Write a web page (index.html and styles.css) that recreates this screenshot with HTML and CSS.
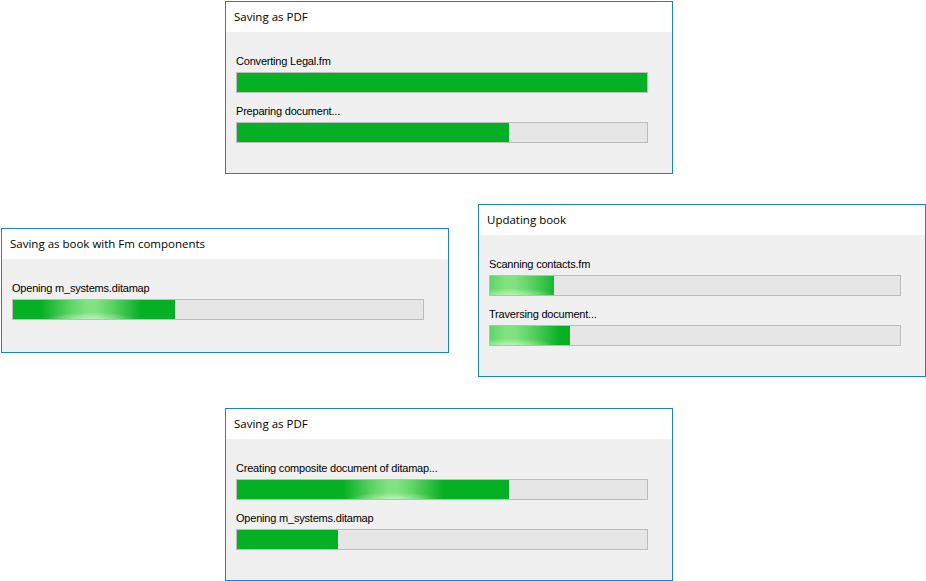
FILE: index.html
```html
<!DOCTYPE html>
<html lang="en">
<head>
<meta charset="utf-8">
<title>Progress dialogs</title>
<link rel="stylesheet" href="styles.css">
</head>
<body>
<div class="desk">
  <div class="row row-1">
    <section class="dlg">
      <header class="dlg-title">Saving as PDF</header>
      <div class="dlg-body">
        <div class="task">
          <div class="task-label">Converting Legal.fm</div>
          <div class="bar"><div class="fill" style="width:410px"></div></div>
        </div>
        <div class="task">
          <div class="task-label">Preparing document...</div>
          <div class="bar"><div class="fill" style="width:272px"></div></div>
        </div>
      </div>
    </section>
  </div>

  <div class="row row-2">
    <section class="dlg dlg-left">
      <header class="dlg-title">Saving as book with Fm components</header>
      <div class="dlg-body dlg-body-single">
        <div class="task">
          <div class="task-label">Opening m_systems.ditamap</div>
          <div class="bar"><div class="fill" style="width:162px"><span class="glow" style="left:28px"></span></div></div>
        </div>
      </div>
    </section>
    <section class="dlg dlg-right">
      <header class="dlg-title">Updating book</header>
      <div class="dlg-body">
        <div class="task">
          <div class="task-label">Scanning contacts.fm</div>
          <div class="bar"><div class="fill" style="width:64px"><span class="glow" style="left:-30px"></span></div></div>
        </div>
        <div class="task">
          <div class="task-label">Traversing document...</div>
          <div class="bar"><div class="fill" style="width:80px"><span class="glow" style="left:-30px"></span></div></div>
        </div>
      </div>
    </section>
  </div>

  <div class="row row-3">
    <section class="dlg">
      <header class="dlg-title">Saving as PDF</header>
      <div class="dlg-body">
        <div class="task">
          <div class="task-label">Creating composite document of ditamap...</div>
          <div class="bar"><div class="fill" style="width:272px"><span class="glow" style="left:106px"></span></div></div>
        </div>
        <div class="task">
          <div class="task-label">Opening m_systems.ditamap</div>
          <div class="bar"><div class="fill" style="width:101px"></div></div>
        </div>
      </div>
    </section>
  </div>
</div>
</body>
</html>
```

FILE: styles.css
```css
html, body {
  margin: 0;
  padding: 0;
  background: #ffffff;
}

body {
  width: 926px;
  height: 581px;
  overflow: hidden;
}

.desk {
  display: flex;
  flex-direction: column;
  align-items: flex-start;
}

.row {
  display: flex;
  align-items: flex-start;
}

.row-1 {
  margin: 1px 0 0 225px;
}

.row-2 {
  margin-top: 30px;
}

.dlg-left {
  margin: 24px 0 0 1px;
}

.dlg-right {
  margin-left: 29px;
}

.row-3 {
  margin: 31px 0 0 225px;
}

.dlg {
  width: 448px;
  box-sizing: border-box;
  border: 1px solid #1b7fd4;
  background: #f0f0f0;
}

.dlg-title {
  height: 30px;
  box-sizing: border-box;
  display: flex;
  align-items: center;
  padding: 0 0 1px 8px;
  background: #ffffff;
  color: #000000;
  font-family: "Open Sans", "Noto Sans", sans-serif;
  font-size: 11.5px;
}

.dlg-body {
  padding: 22px 24px 30px 10px;
}

.dlg-body-single {
  padding-bottom: 32px;
}

.task + .task {
  margin-top: 11px;
}

.task-label {
  font-family: "Liberation Sans", Arial, sans-serif;
  font-size: 11px;
  line-height: 15px;
  letter-spacing: -0.2px;
  color: #000000;
  margin-bottom: 3px;
  white-space: nowrap;
}

.bar {
  width: 412px;
  height: 21px;
  box-sizing: border-box;
  border: 1px solid #bcbcbc;
  background: #e6e6e6;
}

.fill {
  position: relative;
  height: 100%;
  overflow: hidden;
  background: #06b025;
}

.glow {
  position: absolute;
  top: 0;
  bottom: 0;
  width: 100px;
  background:
    radial-gradient(ellipse 45% 35% at 50% 100%, rgba(215, 250, 215, 0.65), rgba(215, 250, 215, 0)),
    linear-gradient(to right,
      rgba(124, 224, 124, 0) 0%,
      rgba(124, 224, 124, 0.75) 30%,
      rgba(128, 226, 128, 1) 45%,
      rgba(128, 226, 128, 1) 55%,
      rgba(124, 224, 124, 0.75) 70%,
      rgba(124, 224, 124, 0) 100%);
}
```
